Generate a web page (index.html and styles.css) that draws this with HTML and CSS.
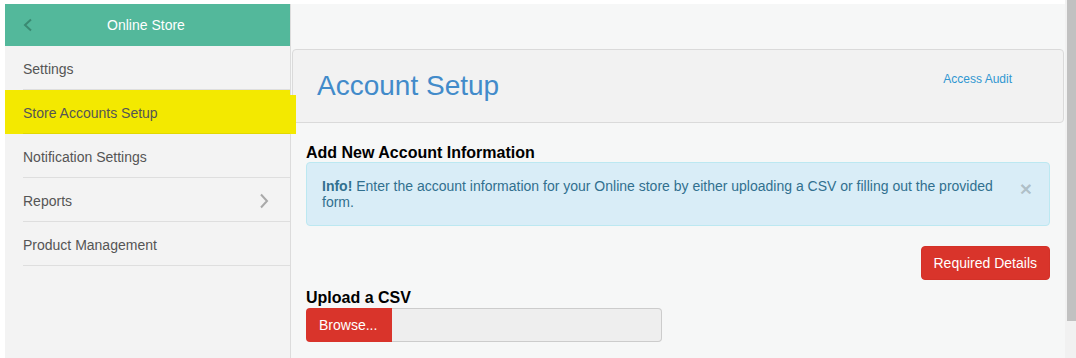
FILE: index.html
```html
<!DOCTYPE html>
<html>
<head>
	<title>Account Setup</title>
	<link rel="stylesheet" href="styles.css">
</head>
<body>
<div class="screen">
	<div class="page">
		<div class="sidebar">
			<div class="sidebar-head">
				<svg class="back" width="12" height="14" viewBox="0 0 12 14"><polyline points="9,1.5 3,7 9,12.5" fill="none" stroke="#3a8a72" stroke-width="2"/></svg>
				<span class="sidebar-title">Online Store</span>
			</div>
			<ul class="menu">
				<li><a>Settings</a></li>
				<li class="active"><a>Store Accounts Setup</a><span class="mark"></span></li>
				<li><a>Notification Settings</a></li>
				<li><a>Reports <svg width="10" height="16" viewBox="0 0 10 16"><polyline points="2,1.5 8,8 2,14.5" fill="none" stroke="#a9a9a9" stroke-width="2"/></svg></a></li>
				<li><a>Product Management</a></li>
			</ul>
		</div>

		<div class="main">
			<div class="panel">
				<h1>Account Setup</h1>
				<a class="audit">Access Audit</a>
			</div>

			<div class="content">
				<h3>Add New Account Information</h3>
				<div class="alert">
					<p><strong>Info!</strong> Enter the account information for your Online store by either uploading a CSV or filling out the provided form.</p>
					<span class="close">&times;</span>
				</div>

				<div class="actions">
					<button class="btn">Required Details</button>
				</div>

				<h3 class="upload-title">Upload a CSV</h3>
				<div class="file">
					<span class="browse">Browse...</span>
					<span class="file-name"></span>
				</div>
			</div>
		</div>
	</div>
	<div class="scrollbar"><div class="thumb"></div></div>
</div>
</body>
</html>
```

FILE: styles.css
```css
html, body {
	margin: 0;
	height: 100%;
	overflow: hidden;
}

body {
	font-family: "Liberation Sans", Arial, sans-serif;
	font-size: 14px;
	background: #fff;
}

.screen {
	display: flex;
	height: 100%;
}

.page {
	flex: 1;
	display: flex;
	padding: 4px 0 0 5px;
	background: #fff;
}

.scrollbar {
	width: 11px;
	background: #f1f1f1;
}

.thumb {
	margin-left: 2px;
	width: 9px;
	height: 321px;
	background: #c1c1c1;
}

/* sidebar */
.sidebar {
	width: 286px;
	box-sizing: border-box;
	background: #f3f3f3;
	border-right: 1px solid #dcdcdc;
}

.sidebar-head {
	height: 42px;
	display: flex;
	align-items: center;
	background: #53b89b;
	color: #fff;
}

.back {
	margin-left: 17px;
}

.sidebar-title {
	flex: 1;
	text-align: center;
	margin-right: 32px;
}

.menu {
	list-style: none;
	margin: 0;
	padding: 0;
}

.menu li {
	position: relative;
	padding-left: 18px;
}

.menu a {
	display: flex;
	justify-content: space-between;
	align-items: center;
	padding: 13px 21px 10px 0;
	line-height: 20px;
	color: #555;
	border-bottom: 1px solid #dedede;
}

.menu li.active {
	background: #f3e900;
}

.menu li.active a {
	border-bottom-color: #e2d800;
}

.mark {
	position: absolute;
	left: 285px;
	top: 5px;
	width: 6px;
	height: 39px;
	background: #f3e900;
}

/* main */
.main {
	flex: 1;
	background: #f6f7f7;
}

.panel {
	display: flex;
	justify-content: space-between;
	align-items: flex-start;
	margin: 45px 1px 0 1px;
	padding: 0 51px 0 24px;
	background: #f2f2f2;
	border: 1px solid #dadada;
	border-radius: 4px;
}

.panel h1 {
	margin: 0;
	padding: 20px 0;
	font-size: 28px;
	line-height: 32px;
	font-weight: normal;
	color: #428bca;
}

.audit {
	margin-top: 22px;
	font-size: 12px;
	line-height: 14px;
	color: #3097d1;
}

.content {
	padding: 0 15px;
}

.content h3 {
	margin: 21px 0 0;
	font-size: 16px;
	line-height: 18px;
	color: #000;
}

.alert {
	display: flex;
	align-items: flex-start;
	padding: 15px 17px 15px 15px;
	background: #d9edf7;
	border: 1px solid #bce8f1;
	border-radius: 4px;
	color: #31708f;
}

.alert p {
	flex: 1;
	margin: 0 7px 0 0;
	line-height: 16px;
}

.close {
	font-size: 21px;
	font-weight: bold;
	line-height: 1;
	color: rgba(0, 0, 0, 0.2);
}

.actions {
	display: flex;
	justify-content: flex-end;
	margin-top: 20px;
}

.btn {
	padding: 6px 12px;
	font-family: inherit;
	font-size: 14px;
	line-height: 20px;
	color: #fff;
	background: #d9342b;
	border: 1px solid #d33128;
	border-radius: 4px;
}

.content h3.upload-title {
	margin: 9px 0 1px;
}

.file {
	display: flex;
	width: 356px;
	height: 34px;
}

.browse {
	width: 86px;
	box-sizing: border-box;
	padding-left: 13px;
	line-height: 34px;
	color: #fff;
	background: #d9342b;
	border-radius: 4px 0 0 4px;
}

.file-name {
	flex: 1;
	background: #eee;
	border: 1px solid #ccc;
	border-left: none;
	border-radius: 0 4px 4px 0;
}
```
